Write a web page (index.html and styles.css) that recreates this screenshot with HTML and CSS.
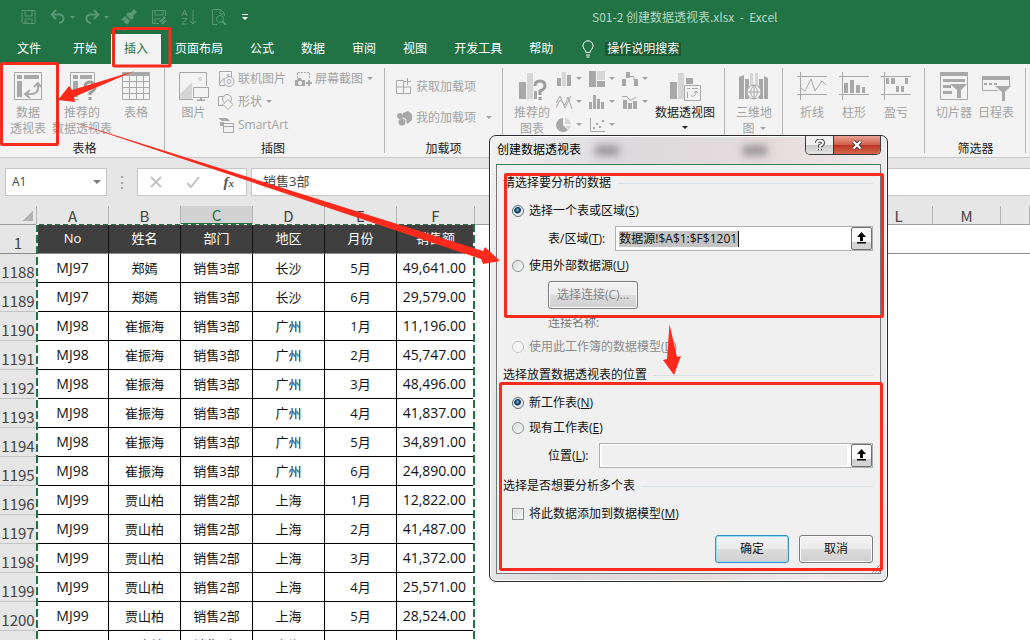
FILE: index.html
```html
<!DOCTYPE html>
<html lang="zh-CN">
<head>
<meta charset="utf-8">
<title>S01-2 创建数据透视表.xlsx - Excel</title>
<link rel="stylesheet" href="styles.css">
</head>
<body>
<div class="app">
  <header class="titlebar">
    <div class="qat">
      <button class="qbtn" aria-label="保存"><svg width="15" height="16" viewBox="0 0 15 16"><path d="M1 1.500h13v13H2.500L1 13zM4 2v5h7V2M4 14v-4h7v4M6 12v2"/></svg></button>
      <button class="qbtn undo" aria-label="撤消"><svg width="25" height="16" viewBox="0 0 25 16"><path class="thick" d="M2 5.500h8q4 1 3.500 4.500T9 14M6 1L1.800 5.500 6 10"/><path class="solid" d="M20 7h5l-2.500 3z"/></svg></button>
      <button class="qbtn redo" aria-label="恢复"><svg width="25" height="16" viewBox="0 0 25 16"><path class="thick" d="M13 5.500H5Q1 6.500 1.500 10T6 14M9 1l4.200 4.500L9 10"/><path class="solid" d="M19 7h5l-2.500 3z"/></svg></button>
      <button class="qbtn brush" aria-label="格式刷"><svg width="16" height="16" viewBox="0 0 16 16"><path class="solid" d="M13 0l3 3-4 4 1 2-3 2-5-5 2-3 2 1zM4 7l5 5-3 4-1-2-1 1-1-3-3-1z"/></svg></button>
      <button class="qbtn" aria-label="另存为"><svg width="16" height="16" viewBox="0 0 16 16"><path d="M14.500 7V1.500h-13v13H8M4 2v4h8V2M4 14v-4h5"/><path class="thick" d="M9 13l5-5M11 15l4-4"/></svg></button>
      <button class="qbtn" aria-label="排序"><svg width="16" height="16" viewBox="0 0 16 16"><path d="M1 7l2.500-6L6 7M2 5h3M1 9.500h5L1 15h5M12 1v14M9 12l3 3 3-3"/></svg></button>
      <button class="qbtn" aria-label="打印预览"><svg width="16" height="16" viewBox="0 0 16 16"><path d="M6 15.500H1.500V.5h8l4 4V7M9 1v4h4"/><circle cx="9" cy="10" r="3.500"/><path class="thick" d="M11.500 12.500L15 16"/></svg></button>
      <button class="qbtn more" aria-label="自定义快速访问工具栏"><svg width="8" height="8" viewBox="0 0 8 8"><path d="M1 1h6v1H1zM1 4h6L4 7z"/></svg></button>
    </div>
    <div class="doc-title">S01-2 创建数据透视表.xlsx &nbsp;-&nbsp; Excel</div>
  </header>

  <nav class="tabs">
    <button class="tab file">文件</button>
    <button class="tab">开始</button>
    <button class="tab active">插入</button>
    <button class="tab">页面布局</button>
    <button class="tab">公式</button>
    <button class="tab">数据</button>
    <button class="tab">审阅</button>
    <button class="tab">视图</button>
    <button class="tab">开发工具</button>
    <button class="tab">帮助</button>
    <svg class="bulb" width="12" height="18" viewBox="0 0 12 18"><path d="M4 12.500C4 10 1 9 1 5.800a5 5 0 0 1 10 0C11 9 8 10 8 12.500zM4 15h4M4.500 17h3"/></svg>
    <button class="tell-me">操作说明搜索</button>
  </nav>

  <div class="ribbon">
    <section class="group g-tables">
      <div class="tools">
        <button class="big"><svg width="30" height="30" viewBox="0 0 30 30"><path class="ln" d="M1.500 1.500h27v27h-27z"/><path class="fill" d="M4 4h5v4H4zM11 4h15v4H11zM4 10h5v16H4z"/><path class="ln2" d="M25 13v4q0 6-7 6h-5M21 16l4-4 3 4M17 19l-5 4 5 4"/></svg><span>数据</span><span>透视表</span></button>
        <button class="big wide"><svg width="30" height="30" viewBox="0 0 30 30"><path class="ln" d="M12 28.500H3.500v-27h24V10"/><path class="fill" d="M6 4h5v4H6zM13 4h12v4H13zM6 10h5v16H6z"/><path class="ln3" d="M18 16q0-5 5-5t5 5q0 3-5 6v2M23 26v3"/></svg><span>推荐的</span><span>数据透视表</span></button>
        <button class="big"><svg width="30" height="30" viewBox="0 0 30 30"><path class="fill" d="M1 1h28v4H1z"/><path class="ln" d="M1.500 1.500h27v27h-27zM1 10.500h28M1 16.500h28M1 22.500h28M8.500 5v24M15.500 5v24M22.500 5v24"/></svg><span>表格</span></button>
      </div>
      <div class="caption">表格</div>
    </section>

    <section class="group g-illus">
      <div class="tools">
        <button class="big"><svg width="30" height="30" viewBox="0 0 30 30"><path class="ln" d="M14 28.500H.5v-27h27V15"/><path class="pale" d="M1 28v-5L13 11v17z"/><circle class="pale" cx="21" cy="8" r="2"/><path class="ln2 paper" d="M14.500 16.500h15v10h-15z"/><path class="ln2" d="M22 27v2M18 29.500h8"/></svg><span>图片</span></button>
        <div class="stack">
          <div class="line">
            <button class="small"><svg width="17" height="16" viewBox="0 0 17 16"><path class="ln" d="M7 14.500H1.500V.5h12V6M2 12l4-5"/><circle class="fill" cx="10" cy="4" r="1"/><circle class="ln2" cx="11" cy="10.500" r="5"/><circle class="ln" cx="11" cy="10.500" r="2"/></svg>联机图片</button>
            <button class="small shot"><svg width="17" height="16" viewBox="0 0 17 16"><path class="ln dash" d="M2.500 7V1.500h12V8"/><path class="fill" fill-rule="evenodd" d="M0 9h2l1-2h3l1 2h3v6H0zM5 10a2 2 0 1 0 .1 0zM13 9h2v2h2v2h-2v2h-2v-2h-2v-2h2z"/></svg>屏幕截图<i class="caret"></i></button>
          </div>
          <button class="small"><svg width="17" height="16" viewBox="0 0 17 16"><path class="ln2" d="M6.500 11.500H.5v-9h6"/><circle class="ln2" cx="9" cy="5" r="4.500"/><path class="ln2 paper" d="M10 5.500l5 5-5 5-5-5z"/></svg>形状<i class="caret"></i></button>
          <button class="small"><svg width="17" height="16" viewBox="0 0 17 16"><path class="fill" d="M0 1h9l3 3H4zM2 5h4v4H2z"/><path class="ln2 paper" d="M5.500 6.500h10v9h-10z"/><path class="ln" d="M6 9.500h9"/></svg>SmartArt</button>
        </div>
      </div>
      <div class="caption">插图</div>
    </section>

    <section class="group g-addins">
      <div class="tools">
        <div class="stack roomy">
          <button class="small"><svg width="17" height="17" viewBox="0 0 17 17"><path class="ln2" d="M7.500 2.500h-7v13h14V9M.5 9H15M7.500 2.500v13M11.500 0v7M8 3.500h7"/></svg>获取加载项</button>
          <button class="small mine"><svg width="17" height="16" viewBox="0 0 17 16"><circle class="fill" cx="4" cy="6" r="3"/><circle class="fill" cx="6" cy="12" r="3.500"/><path class="fill" d="M7 3l5-2 4 3v6l-5 4-1-5-4-2z"/></svg>我的加载项<i class="caret"></i></button>
        </div>
      </div>
      <div class="caption">加载项</div>
    </section>

    <section class="group g-charts">
      <div class="tools">
        <button class="big"><svg width="30" height="30" viewBox="0 0 30 30"><path class="fill" d="M2 11h7v17H2z"/><path class="pale" d="M10 2h6v26h-6z"/><path class="fill" d="M17 20h3v8h-3z"/><path class="ln3" d="M18 15q0-5 5-5t5 5q0 3-5 5v4M23 26v3"/></svg><span>推荐的</span><span>图表</span></button>
        <div class="chart-grid">
          <button class="mini" aria-label="柱形图"><svg width="17" height="16" viewBox="0 0 17 16"><path class="fill" d="M1 7h4v8H1zM11 4h4v11h-4z"/><path class="pale" d="M6 1h4v14H6z"/></svg><i class="caret"></i></button>
          <button class="mini" aria-label="层次结构图"><svg width="17" height="16" viewBox="0 0 17 16"><path class="fill" d="M0 0h7v16H0zM8 10h8v6H8z"/><path class="pale" d="M8 0h8v9H8z"/></svg><i class="caret"></i></button>
          <button class="mini" aria-label="瀑布图"><svg width="17" height="16" viewBox="0 0 17 16"><path class="fill" d="M0 8h4v7H0zM4 1h4v6H4zM12 8h4v7h-4z"/><path class="ln" d="M8 5.500h4M12 6v3"/></svg><i class="caret"></i></button>
          <button class="mini" aria-label="折线图"><svg width="17" height="16" viewBox="0 0 17 16"><path class="ln" d="M0 9l4-7 5 12 6-12M0 14L4 6l5 5 3-8 4 12"/></svg><i class="caret"></i></button>
          <button class="mini" aria-label="统计图"><svg width="17" height="16" viewBox="0 0 17 16"><path class="fill" d="M0 8h3v7H0zM4 1h3v14H4zM8 5h3v10H8zM12 8h3v7h-3z"/></svg><i class="caret"></i></button>
          <button class="mini" aria-label="组合图"><svg width="17" height="16" viewBox="0 0 17 16"><path class="fill" d="M1 6h4v9H1zM6 9h4v6H6zM11 7h4v8h-4z"/><path class="ln" d="M0 2.500h5l3 4 6-3"/></svg><i class="caret"></i></button>
          <button class="mini" aria-label="饼图"><svg width="17" height="16" viewBox="0 0 17 16"><path class="fill" d="M7 1v7l5 5A7 7 0 1 1 7 1z"/><path class="pale" d="M9 1a6.500 6.500 0 0 1 6 6H9zM9 9h6l-2 4z"/></svg><i class="caret"></i></button>
          <button class="mini" aria-label="散点图"><svg width="17" height="16" viewBox="0 0 17 16"><path class="ln" d="M1.500 1v13.500H16"/><path class="fill" d="M4 10h2v2H4zM7 6h2v2H7zM10 9h2v2h-2zM13 3h2v2h-2z"/></svg><i class="caret"></i></button>
        </div>
        <button class="big wide on"><svg width="32" height="30" viewBox="0 0 32 30"><path class="fill" d="M1 11h7v17H1zM17 7h7v6h-7z"/><path class="pale" d="M9 2h6v26H9z"/><path class="ln paper" d="M15.500 14.500h16v15h-16z"/><path class="ln" d="M18 17.500h3M23 17.500h6M18.500 21v6M22 25q5 1 5-4M25 22l2-2 2 2"/></svg><span>数据透视图</span><i class="caret"></i></button>
      </div>
    </section>

    <section class="group g-map">
      <div class="tools">
        <button class="big"><svg width="32" height="30" viewBox="0 0 32 30"><path class="fill" d="M1 6l5-2v24H1zM7 8h4v20H7zM26 5l4 2v21h-4zM21 8h4v20h-4z"/><path class="pale" d="M12 2h3v14h-3zM17 2h3v14h-3z"/><circle class="ln2 paper" cx="16" cy="21" r="7"/><path class="ln" d="M9 21h14M16 14v14M16 14q-7 7 0 14M16 14q7 7 0 14"/></svg><span>三维地</span><span>图<i class="caret"></i></span></button>
      </div>
    </section>

    <section class="group g-spark">
      <div class="tools">
        <button class="big"><svg width="30" height="30" viewBox="0 0 30 30"><path class="ln" d="M0 5.500h30M0 23.500h30M3.500 1v28M4 17l4 3 6-12 4 12 7-10 4 4"/></svg><span>折线</span></button>
        <button class="big"><svg width="30" height="30" viewBox="0 0 30 30"><path class="ln" d="M0 5.500h30M0 23.500h30M3.500 1v28"/><path class="fill" d="M5 12h4v10H5zM11 9h4v13h-4zM17 14h4v8h-4zM23 16h3v6h-3z"/></svg><span>柱形</span></button>
        <button class="big"><svg width="30" height="30" viewBox="0 0 30 30"><path class="ln" d="M0 5.500h30M0 23.500h30M3.500 1v28"/><path class="fill" d="M5 7h3v6H5zM10 7h4v6h-4zM24 7h3v6h-3zM15 15h3v6h-3zM20 15h3v6h-3z"/></svg><span>盈亏</span></button>
      </div>
    </section>

    <section class="group g-filter">
      <div class="tools">
        <button class="big"><svg width="30" height="30" viewBox="0 0 30 30"><path class="ln" d="M1.500 1.500h27v27h-27z"/><path class="fill" d="M1 1h28v4H1zM4 8h22v3H4zM4 14h8v3H4zM4 20h9v3H4zM11 13h17l-6 6v8h-4v-8z"/></svg><span>切片器</span></button>
        <button class="big"><svg width="30" height="30" viewBox="0 0 30 30"><path class="fill" d="M1 5h28v4H1zM3 12h3v2H3zM8 12h3v2H8zM13 12h3v2h-3zM14 15h16l-6 6v9h-3v-9z"/><path class="ln" d="M17 19.500H1.500v-14h27V15"/></svg><span>日程表</span></button>
      </div>
      <div class="caption">筛选器</div>
    </section>
  </div>

  <div class="formula-bar">
    <div class="name-box"><input aria-label="名称框" value="A1"><i class="caret"></i></div>
    <span class="dots">⋮</span>
    <div class="fx-box">
      <button aria-label="取消输入"><svg width="14" height="14" viewBox="0 0 14 14"><path class="ln2" d="M2 2l10 10M12 2L2 12"/></svg></button>
      <button aria-label="输入"><svg width="14" height="14" viewBox="0 0 14 14"><path class="ln2" d="M1 8l4 4 8-10"/></svg></button>
      <button class="fx" aria-label="插入函数">f<small>x</small></button>
    </div>
    <input class="formula" aria-label="编辑栏" value="销售3部">
  </div>

  <main class="sheet">
    <table>
      <colgroup><col class="c-num"><col class="c-std"><col class="c-std"><col class="c-std"><col class="c-std"><col class="c-std"><col class="c-wide"><col class="c-wide"><col class="c-wide"><col class="c-wide"><col class="c-wide"><col class="c-wide"><col class="c-mid"><col class="c-mid"><col></colgroup>
      <thead>
        <tr class="letters"><th class="corner"></th><th>A</th><th>B</th><th class="sel">C</th><th>D</th><th>E</th><th>F</th><th>G</th><th>H</th><th>I</th><th>J</th><th>K</th><th>L</th><th>M</th><th></th></tr>
        <tr class="fields"><th class="rn">1</th><th>No</th><th>姓名</th><th>部门</th><th>地区</th><th>月份</th><th>销售额</th><td colspan="8"></td></tr>
      </thead>
      <tbody>
        <tr><th class="rn">1188</th><td>MJ97</td><td>郑嫣</td><td>销售3部</td><td>长沙</td><td>5月</td><td>49,641.00</td></tr>
        <tr><th class="rn">1189</th><td>MJ97</td><td>郑嫣</td><td>销售3部</td><td>长沙</td><td>6月</td><td>29,579.00</td></tr>
        <tr><th class="rn">1190</th><td>MJ98</td><td>崔振海</td><td>销售3部</td><td>广州</td><td>1月</td><td>11,196.00</td></tr>
        <tr><th class="rn">1191</th><td>MJ98</td><td>崔振海</td><td>销售3部</td><td>广州</td><td>2月</td><td>45,747.00</td></tr>
        <tr><th class="rn">1192</th><td>MJ98</td><td>崔振海</td><td>销售3部</td><td>广州</td><td>3月</td><td>48,496.00</td></tr>
        <tr><th class="rn">1193</th><td>MJ98</td><td>崔振海</td><td>销售3部</td><td>广州</td><td>4月</td><td>41,837.00</td></tr>
        <tr><th class="rn">1194</th><td>MJ98</td><td>崔振海</td><td>销售3部</td><td>广州</td><td>5月</td><td>34,891.00</td></tr>
        <tr><th class="rn">1195</th><td>MJ98</td><td>崔振海</td><td>销售3部</td><td>广州</td><td>6月</td><td>24,890.00</td></tr>
        <tr><th class="rn">1196</th><td>MJ99</td><td>贾山柏</td><td>销售2部</td><td>上海</td><td>1月</td><td>12,822.00</td></tr>
        <tr><th class="rn">1197</th><td>MJ99</td><td>贾山柏</td><td>销售2部</td><td>上海</td><td>2月</td><td>41,487.00</td></tr>
        <tr><th class="rn">1198</th><td>MJ99</td><td>贾山柏</td><td>销售2部</td><td>上海</td><td>3月</td><td>41,372.00</td></tr>
        <tr><th class="rn">1199</th><td>MJ99</td><td>贾山柏</td><td>销售2部</td><td>上海</td><td>4月</td><td>25,571.00</td></tr>
        <tr><th class="rn">1200</th><td>MJ99</td><td>贾山柏</td><td>销售2部</td><td>上海</td><td>5月</td><td>28,524.00</td></tr>
        <tr><th class="rn">1201</th><td>MJ99</td><td>贾山柏</td><td>销售2部</td><td>上海</td><td>6月</td><td>16,987.00</td></tr>
      </tbody>
    </table>
    <div class="ants"></div>
  </main>

  <form class="dialog" role="dialog" aria-label="创建数据透视表">
    <div class="dlg-title">
      <span>创建数据透视表</span><i class="smudge"></i><i class="smudge far"></i>
      <div class="dlg-controls">
        <button type="button" class="help" aria-label="帮助"><svg width="10" height="13" viewBox="0 0 10 13"><path class="outer" d="M2 4q0-2.500 3-2.500T8 4q0 1.500-3 3v1.500M5 10v1.500"/><path class="inner" d="M2 4q0-2.500 3-2.500T8 4q0 1.500-3 3v1.500M5 10v1.500"/></svg></button>
        <button type="button" class="close" aria-label="关闭"><svg width="14" height="12" viewBox="0 0 14 12"><path class="outer" d="M3.500 2.500l7 7M10.500 2.500l-7 7"/><path class="inner" d="M3.500 2.500l7 7M10.500 2.500l-7 7"/></svg></button>
      </div>
    </div>
    <div class="dlg-body">
      <div class="head">请选择要分析的数据</div>
      <label class="opt"><input type="radio" name="src" checked><span>选择一个表或区域(<u>S</u>)</span></label>
      <div class="field"><label for="range">表/区域(<u>T</u>):</label><div class="ref"><input id="range" class="marked" value="数据源!$A$1:$F$1201"><button type="button" aria-label="选择区域"><svg width="11" height="12" viewBox="0 0 11 12"><path d="M5.500 0L10 5H7v4H4V5H1zM1 10h9v1.500H1z"/></svg></button></div></div>
      <label class="opt"><input type="radio" name="src"><span>使用外部数据源(<u>U</u>)</span></label>
      <button type="button" class="connect" disabled>选择连接(C)...</button>
      <div class="note">连接名称:</div>
      <label class="opt off"><input type="radio" name="src" disabled><span>使用此工作簿的数据模型(<u>D</u>)</span></label>
      <div class="head">选择放置数据透视表的位置</div>
      <label class="opt"><input type="radio" name="dest" checked><span>新工作表(<u>N</u>)</span></label>
      <label class="opt"><input type="radio" name="dest"><span>现有工作表(<u>E</u>)</span></label>
      <div class="field"><label for="loc">位置(<u>L</u>):</label><div class="ref"><input id="loc" class="empty"><button type="button" aria-label="选择位置"><svg width="11" height="12" viewBox="0 0 11 12"><path d="M5.500 0L10 5H7v4H4V5H1zM1 10h9v1.500H1z"/></svg></button></div></div>
      <div class="head">选择是否想要分析多个表</div>
      <label class="opt"><input type="checkbox"><span>将此数据添加到数据模型(<u>M</u>)</span></label>
      <div class="actions"><button type="button" class="ok">确定</button><button type="button">取消</button></div>
      <svg class="grip" width="9" height="9" viewBox="0 0 9 9"><path d="M1 9l8-8M4 9l5-5M7 9l2-2"/></svg>
    </div>
  </form>

  <svg class="marks" width="1030" height="640" viewBox="0 0 1030 640" aria-hidden="true">
    <g class="boxes">
      <rect x="113.500" y="28.500" width="56.500" height="37.500" rx="1"/>
      <rect x="1.500" y="63.500" width="56" height="81" rx="1"/>
      <rect x="505.500" y="174.500" width="377" height="142" rx="1"/>
      <rect x="500.500" y="383.500" width="381" height="186" rx="1"/>
    </g>
    <path d="M134.500 71L74 97l1 5-17-2 11-14 3 4z"/>
    <path d="M65 119.500L483 251l2-4 15 14-17 3-2-5z"/>
    <path d="M669.500 324L677 357l4-1-7 19-11-15 4-1z"/>
  </svg>
</div>
</body>
</html>
```
FILE: styles.css
```css
* { box-sizing: border-box; }
body {
  margin: 0;
  font: 12px/16px "Open Sans", "Noto Sans CJK SC", sans-serif;
  color: #222;
}
button, input { font: inherit; color: inherit; }
button { border: 0; padding: 0; background: none; }
svg { display: block; flex: none; }
.app {
  position: relative;
  display: flex;
  flex-direction: column;
  height: 100vh;
  overflow: hidden;
  background: #fff;
}

/* title bar */
.titlebar {
  display: flex;
  align-items: center;
  height: 34px;
  background: #217346;
  color: #b4d8c2;
}
.doc-title { font-family: "Noto Sans CJK SC", sans-serif; }
.qat {
  display: flex;
  flex: 0 0 592px;
  align-items: center;
  gap: 14px;
  padding-left: 21px;
}
.qbtn path, .qbtn circle { fill: none; stroke: #579774; }
.qbtn .thick { stroke-width: 2; }
.qbtn .solid { fill: #579774; stroke: none; }
.qbtn.more path { fill: #fff; stroke: none; }
.redo { margin-right: -3px; }
.undo { margin-right: -4px; }

/* ribbon tabs */
.tabs {
  display: flex;
  align-items: center;
  gap: 1px;
  height: 30px;
  padding-left: 4px;
  background: #217346;
  color: #fff;
}
.tab { height: 30px; padding: 0 13px; }
.tab.file { margin-right: 5px; }
.tab.active { background: #f3f3f3; color: #217346; }
.bulb { margin: 0 10px 0 15px; fill: none; stroke: #fff; }
.tell-me { height: 14px; padding: 0 2px; line-height: 14px; background: #185b37; }

/* ribbon */
.ribbon {
  display: flex;
  height: 94px;
  border-bottom: 1px solid #c8c8c8;
  background: #f3f3f3;
  color: #a3a3a3;
}
.group {
  position: relative;
  display: flex;
  flex: none;
  flex-direction: column;
  justify-content: space-between;
  padding: 7px 0 0;
}
.group::after {
  content: "";
  position: absolute;
  top: 4px;
  right: 0;
  bottom: 4px;
  width: 1px;
  background: #b5b5b5;
}
.tools { display: flex; align-items: flex-start; }
.caption { text-align: center; color: #222; }
.big {
  display: flex;
  flex: none;
  flex-direction: column;
  align-items: center;
  width: 48px;
  white-space: nowrap;
}
.big svg { margin-bottom: 4px; }
.big.wide { width: 60px; }
.big.on { color: #222; }
.big.on .caret { margin-top: 5px; }
.small { display: flex; align-items: center; gap: 3px; height: 23px; }
.line { display: flex; gap: 9px; }
.stack, .chart-grid { margin-top: -4px; }
.stack.roomy { margin-top: 0; }
.stack.roomy .small { height: 31px; }
.caret {
  display: inline-block;
  flex: none;
  width: 6px;
  border: 3px solid transparent;
  border-top-color: currentColor;
  border-bottom: 0;
}
.small .caret { margin-left: 1px; }
.mine .caret { margin-left: 7px; }
.big span .caret { margin: 0 0 3px 5px; }
.g-tables { width: 165px; padding-left: 4px; }
.g-illus { width: 220px; padding-left: 4px; }
.g-addins { width: 118px; padding-left: 11px; }
.g-addins .caption { padding-right: 12px; }
.g-illus .caption, .g-filter .caption { padding-right: 8px; }
.g-charts { width: 222px; padding-left: 5px; }
.g-map { width: 58px; padding-left: 5px; }
.g-spark { width: 142px; padding-left: 8px; }
.g-filter { width: 101px; padding-left: 8px; }
.g-spark .big, .g-filter .big { width: 42px; }
.g-illus .big { width: 49px; }
.chart-grid {
  display: grid;
  grid-template-columns: repeat(3, 33px);
  grid-auto-rows: 23px;
  align-items: center;
}
.mini { display: flex; align-items: center; gap: 3px; }
.ln, .ln2, .ln3 { fill: none; stroke: #a8a8a8; }
.ln2 { stroke-width: 2; }
.small .ln2 { stroke-width: 1; }
.ln3 { stroke-width: 3; stroke: #9d9d9d; }
.fill { fill: #a8a8a8; }
.pale { fill: #d6d6d6; }
.paper { fill: #f3f3f3; stroke-width: 1; }
.dash { stroke-dasharray: 2 1; }

/* formula bar */
.formula-bar {
  display: flex;
  align-items: stretch;
  padding: 10px 0 10px 5px;
  background: #e6e6e6;
}
.name-box, .fx-box, .formula { height: 28px; border: 1px solid #c6c6c6; background: #fff; }
.name-box { display: flex; align-items: center; width: 102px; padding: 0 5px 0 6px; color: #444; }
.name-box input { flex: 1; width: 0; border: 0; padding: 0; background: none; }
.name-box .caret { width: 8px; border-width: 4px; border-bottom: 0; color: #777; }
.dots { width: 30px; text-align: center; font-size: 16px; line-height: 28px; color: #999; }
.fx-box { display: flex; align-items: center; justify-content: space-between; width: 110px; padding: 0 12px 0 11px; }
.fx-box .ln2 { stroke: #c2c2c2; }
.fx { font: italic 700 15px/20px "Liberation Serif", serif; color: #555; }
.fx small { font-size: 11px; }
.formula { flex: 1; width: 0; margin-left: 4px; padding: 0 11px 4px; border-right: 0; font-size: 13px; color: #444; }

/* worksheet */
.sheet { position: relative; flex: 1; min-height: 0; overflow: hidden; }
table { width: 100%; table-layout: fixed; border-collapse: separate; border-spacing: 0; }
.c-num { width: 37px; }
.c-std { width: 72px; }
.c-wide { width: 78px; }
.c-mid { width: 68px; }
th, td { height: 29px; padding: 0; font-weight: 400; text-align: center; overflow: hidden; white-space: nowrap; line-height: 20px; }
.letters th {
  height: 19px;
  border-right: 1px solid #b4b4b4;
  border-bottom: 1px solid #9c9c9c;
  background: #e6e6e6;
  font: 15px/17px "Noto Sans CJK SC", sans-serif;
  color: #444;
}
.letters .sel { background: #d2d2d2; border-bottom: 2px solid #217346; color: #217346; }
.letters .corner { background: linear-gradient(135deg, transparent 50%, #b4b4b4 50%) right 3px bottom 3px / 11px 11px no-repeat #e6e6e6; }
.rn {
  border-right: 1px solid #9c9c9c;
  border-bottom: 1px solid #c4c4c4;
  background: #e6e6e6;
  font: 15px/20px "Noto Sans CJK SC", sans-serif;
  color: #444;
  vertical-align: bottom;
}
.fields th, .fields td { border-bottom: 1px solid #8a8a8a; }
.fields th:not(.rn) { padding-bottom: 3px; border-right: 1px solid #111; background: #3f3f3f; font-size: 13px; color: #fff; }
tbody td { border-right: 1px solid #000; border-bottom: 1px solid #000; font-size: 13px; color: #111; }
tbody td:nth-child(2), tbody td:nth-child(7) { font-size: 14px; }
tbody td:nth-child(7) { padding-right: 8px; border-right-color: transparent; text-align: right; }
.ants {
  position: absolute;
  top: 18px;
  left: 36px;
  width: 439px;
  bottom: 0;
  background:
    repeating-linear-gradient(90deg, #fff 0 3px, #217346 3px 8px) top / 100% 1px no-repeat,
    repeating-linear-gradient(#217346 0 8px, #fff 8px 11px) left / 2px 100% no-repeat,
    repeating-linear-gradient(#217346 0 8px, #fff 8px 11px) right / 2px 100% no-repeat;
}

/* dialog */
.dialog {
  position: absolute;
  top: 135px;
  left: 489px;
  width: 399px;
  padding: 0 6px 7px;
  border: 1px solid #2b2b2b;
  border-radius: 7px;
  background: linear-gradient(100deg, #f1f1f2, #dcdadc 30%, #e6dcde 60%, #efeaeb 85%, #e6e6e7);
  box-shadow: inset 0 0 0 1px #fff;
  color: #111;
}
.dlg-title { display: flex; align-items: center; height: 28px; padding-left: 1px; color: #000; }
.smudge { width: 24px; height: 9px; margin-left: 14px; background: #8c8a8c; filter: blur(4px); }
.smudge.far { margin-left: 124px; }
.dlg-controls {
  display: flex;
  align-self: flex-start;
  margin-left: auto;
  border: 1px solid #3c3c3c;
  border-top: 0;
  border-radius: 0 0 5px 5px;
  overflow: hidden;
}
.dlg-controls button { display: flex; align-items: center; justify-content: center; height: 18px; }
.help { width: 27px; background: linear-gradient(#f0f0f0 50%, #c9c9c9 50%, #e4e4e4); }
.close { width: 47px; border-left: 1px solid #6b1f15; background: linear-gradient(#e9a295, #d2604b 48%, #b93422 50%, #d8674c); }
.dlg-controls path { fill: none; }
.outer { stroke: #444; stroke-width: 4; }
.inner { stroke: #fff; stroke-width: 2; }
.dlg-body {
  position: relative;
  display: flex;
  flex-direction: column;
  gap: 5px;
  padding: 5px 7px 10px 6px;
  border: 1px solid #777;
  border-top-color: #3c7d50;
  background: #f0f0f0;
}
.head { display: flex; align-items: center; gap: 6px; height: 20px; margin: 3px 0; }
.head::after { content: ""; flex: 1; height: 1px; background: #d5dfe5; }
.opt { display: flex; align-items: center; gap: 5px; height: 20px; padding-left: 9px; }
.opt input {
  appearance: none;
  width: 12px;
  height: 12px;
  margin: 0;
  border: 1px solid #8e8f8f;
  background: linear-gradient(135deg, #d3d6d9, #fbfbfb);
  box-shadow: inset 0 0 0 1px #f4f4f4;
}
.opt input[type="radio"] { border-radius: 50%; }
.opt input:checked { border-color: #5a6f80; background: radial-gradient(circle at 45% 40%, #8fc6e6 0, #1b4b77 2px, #163a5e 3px, #e4e8ea 4px); }
.opt.off { color: #8a8a8a; }
.opt.off input { border-color: #c4c4c4; background: #f6f6f6; }
.field { display: flex; align-items: center; gap: 10px; height: 25px; padding-left: 45px; }
.ref { position: relative; display: flex; flex: 1; height: 25px; border: 1px solid #b0b0b0; background: #fff; }
.ref input { flex: 1; width: 0; border: 0; padding: 0 3px; background: none; outline: 0; }
.ref .marked { background: linear-gradient(90deg, #c4c4c4 119px, #111 119px) 3px 4px / 120px 16px no-repeat; }
.ref .empty { margin: 1px 4px 1px 2px; background: #f0f0f0; }
.ref button {
  display: flex;
  justify-content: center;
  width: 21px;
  padding-top: 4px;
  border: 1px solid #6f6f6f;
  border-radius: 2px;
  background: linear-gradient(#fafafa 65%, #d4d4d4 65%);
}
.connect, .actions button {
  height: 28px;
  border: 1px solid #7d7d7d;
  border-radius: 3px;
  background: linear-gradient(#f3f3f3, #ebebeb 50%, #dcdcdc 50%, #d0d0d0);
  box-shadow: inset 0 0 0 1px #fafafa;
}
.connect { width: 90px; margin-left: 45px; color: #838383; }
.note { height: 18px; padding-left: 45px; line-height: 18px; color: #777; }
.actions { display: flex; justify-content: flex-end; gap: 10px; margin-top: 6px; }
.actions button { width: 74px; }
.actions .ok { border-color: #3c8fc0; box-shadow: inset 0 0 0 1px #9edcf2; }
.grip { position: absolute; right: 0; bottom: 0; stroke: #999; }

/* tutorial highlights */
.marks { position: absolute; top: 0; left: 0; fill: #ff2a1c; pointer-events: none; }
.boxes { fill: none; stroke: #f92a1e; stroke-width: 3; }
```
